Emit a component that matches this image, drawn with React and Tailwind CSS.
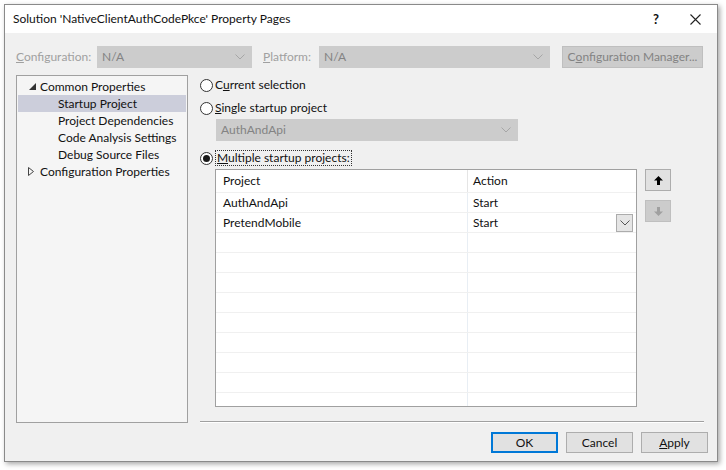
import React from "react";

const Chevron = ({ color = "#a6a6a6" }) => (
  <svg width="10" height="6" viewBox="0 0 10 6">
    <path d="M0.5 0.5 L5 5 L9.5 0.5" fill="none" stroke={color} strokeWidth="1" />
  </svg>
);

const DisabledCombo = ({ value, className }) => (
  <div className={`h-[22px] bg-[#cccccc] border border-[#cccccc] flex items-center justify-between pl-[4px] pr-[6px] text-[#838383] ${className}`}>
    <span>{value}</span>
    <Chevron />
  </div>
);

const Radio = ({ checked }) => (
  <div className="w-[13px] h-[13px] rounded-full border border-[#333333] bg-white flex items-center justify-center shrink-0">
    {checked && <div className="w-[7px] h-[7px] rounded-full bg-[#1a1a1a]" />}
  </div>
);

const treeItems = [
  { label: "Startup Project", selected: true },
  { label: "Project Dependencies" },
  { label: "Code Analysis Settings" },
  { label: "Debug Source Files" },
];

const rows = [
  { project: "AuthAndApi", action: "Start" },
  { project: "PretendMobile", action: "Start", dropdown: true },
  {}, {}, {}, {}, {}, {}, {}, {}, {},
];

const Button = ({ children, primary }) => (
  <div
    className={`w-[67px] h-[21px] flex items-center justify-center bg-[#e1e1e1] ${
      primary ? "border-2 border-[#0078d7]" : "border border-[#adadad]"
    }`}
  >
    {children}
  </div>
);

export default function App() {
  return (
    <div className="w-[726px] h-[470px] bg-white pt-[4px] pl-[4px] font-['Segoe_UI',Lato,sans-serif] text-[12px] text-[#111111] leading-none">
      <div className="w-[714px] h-[458px] border border-[#8a8a8a] bg-[#f0f0f0] shadow-[2px_2px_5px_rgba(0,0,0,0.35)] flex flex-col">
        {/* title bar */}
        <div className="h-[28px] bg-white flex items-center pl-[8px] pr-[16px]">
          <span className="text-[12px]">Solution 'NativeClientAuthCodePkce' Property Pages</span>
          <span className="ml-auto text-[13px] font-bold">?</span>
          <svg className="ml-[31px]" width="11" height="11" viewBox="0 0 11 11">
            <path d="M0.5 0.5 L10.5 10.5 M10.5 0.5 L0.5 10.5" stroke="#222" strokeWidth="1.1" />
          </svg>
        </div>

        <div className="pl-[11px] pr-[13px] pt-[13px]">
          {/* configuration row */}
          <div className="flex items-center h-[22px] text-[#a0a0a0]">
            <span className="w-[81px]"><u>C</u>onfiguration:</span>
            <DisabledCombo value="N/A" className="w-[155px]" />
            <span className="ml-[11px] w-[56px]"><u>P</u>latform:</span>
            <DisabledCombo value="N/A" className="w-[231px]" />
            <div className="ml-[12px] w-[141px] h-[22px] bg-[#cccccc] border border-[#bfbfbf] flex items-center justify-center text-[#838383]">
              C<u>o</u>nfiguration Manager...
            </div>
          </div>

          {/* main */}
          <div className="flex mt-[7px] h-[348px]">
            <div className="w-[172px] border border-[#a0a0a0] bg-[#f5f5f5] pt-[2px] px-[1px]">
              <div className="h-[17px] flex items-center">
                <svg className="ml-[11px]" width="7" height="7" viewBox="0 0 7 7">
                  <polygon points="7,0 7,7 0,7" fill="#333" />
                </svg>
                <span className="ml-[4px]">Common Properties</span>
              </div>
              {treeItems.map((it) => (
                <div key={it.label} className={`h-[17px] flex items-center pl-[40px] ${it.selected ? "bg-[#cccedb]" : ""}`}>
                  {it.label}
                </div>
              ))}
              <div className="h-[17px] flex items-center">
                <svg className="ml-[10px]" width="6" height="9" viewBox="0 0 6 9">
                  <polygon points="0.5,0.5 5.5,4.5 0.5,8.5" fill="none" stroke="#444" strokeWidth="1" />
                </svg>
                <span className="ml-[6px]">Configuration Properties</span>
              </div>
            </div>

            <div className="flex-1 ml-[12px] flex flex-col">
              <div className="flex items-center h-[16px] mt-[2px] gap-[2px]">
                <Radio />
                <span>C<u>u</u>rrent selection</span>
              </div>
              <div className="flex items-center h-[16px] mt-[7px] gap-[2px]">
                <Radio />
                <span><u>S</u>ingle startup project</span>
              </div>
              <DisabledCombo value="AuthAndApi" className="w-[302px] ml-[16px] mt-[3px]" />
              <div className="flex items-center h-[16px] mt-[9px] gap-[2px]">
                <Radio checked />
                <span className="border border-dotted border-[#333] px-[1px] py-[1px]"><u>M</u>ultiple startup projects:</span>
              </div>

              <div className="flex mt-[3px]">
                <div className="ml-[15px] w-[422px] h-[238px] border border-[#a0a0a0] bg-white overflow-hidden">
                  <div className="flex h-[23px] border-b border-[#f0f0f0]">
                    <div className="w-[252px] pl-[7px] flex items-center border-r border-[#e5e5e5]">Project</div>
                    <div className="flex-1 pl-[5px] flex items-center">Action</div>
                  </div>
                  {rows.map((r, i) => (
                    <div key={i} className="flex h-[20px] border-b border-[#f0f0f0]">
                      <div className="w-[252px] pl-[7px] flex items-center border-r border-[#e8eef4]">{r.project}</div>
                      <div className="flex-1 pl-[5px] pr-[3px] flex items-center">
                        <span>{r.action}</span>
                        {r.dropdown && (
                          <div className="ml-auto w-[17px] h-[18px] bg-[#e5e5e5] border border-[#acacac] flex items-center justify-center">
                            <Chevron color="#555" />
                          </div>
                        )}
                      </div>
                    </div>
                  ))}
                </div>
                <div className="ml-[8px] flex flex-col gap-[9px]">
                  <div className="w-[26px] h-[22px] bg-[#e1e1e1] border border-[#adadad] flex items-center justify-center">
                    <svg width="9" height="9" viewBox="0 0 9 9">
                      <polygon points="4.5,0 9,4.5 6,4.5 6,9 3,9 3,4.5 0,4.5" fill="#000" />
                    </svg>
                  </div>
                  <div className="w-[26px] h-[22px] bg-[#cccccc] border border-[#bfbfbf] flex items-center justify-center">
                    <svg width="9" height="9" viewBox="0 0 9 9">
                      <polygon points="4.5,9 9,4.5 6,4.5 6,0 3,0 3,4.5 0,4.5" fill="#a0a0a0" />
                    </svg>
                  </div>
                </div>
              </div>

              <div className="mt-auto border-t border-[#a0a0a0] border-b border-b-white" />
            </div>
          </div>
        </div>

        {/* bottom buttons */}
        <div className="flex justify-end gap-[8px] pr-[9px] mt-[9px]">
          <Button primary>OK</Button>
          <Button>Cancel</Button>
          <Button><span><u>A</u>pply</span></Button>
        </div>
      </div>
    </div>
  );
}
